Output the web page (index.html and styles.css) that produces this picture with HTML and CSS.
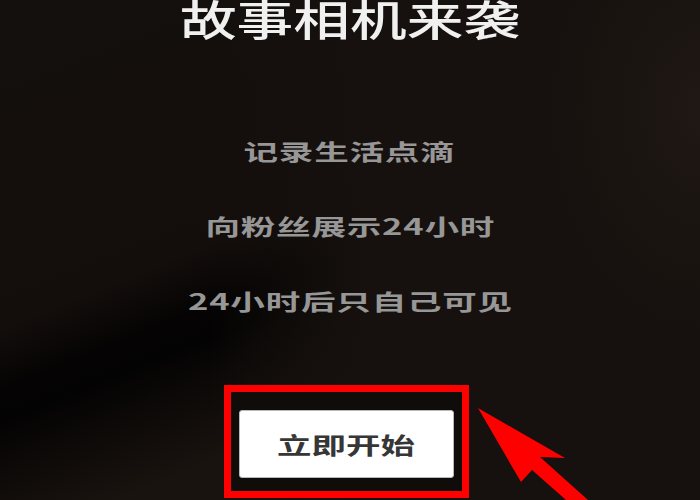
FILE: index.html
```html
<!DOCTYPE html>
<html lang="zh-CN">
<head>
<meta charset="utf-8">
<title>故事相机来袭</title>
<link rel="stylesheet" href="styles.css">
</head>
<body>
<main class="page">
  <h1 class="title"><span class="stretch-title">故事相机来袭</span></h1>
  <ul class="features">
    <li class="feature"><span class="stretch-line">记录生活点滴</span></li>
    <li class="feature"><span class="stretch-line">向粉丝展示24小时</span></li>
    <li class="feature"><span class="stretch-line">24小时后只自己可见</span></li>
  </ul>
  <div class="highlight">
    <button class="start-btn"><span class="stretch-btn">立即开始</span></button>
  </div>
  <svg class="arrow" width="130" height="100" viewBox="0 0 130 100" aria-hidden="true">
    <polygon points="8,8 95,58 70,57 118,100 96,100 62,70 51,82" fill="#ff0000"/>
  </svg>
</main>
</body>
</html>
```

FILE: styles.css
```css
html, body {
  margin: 0;
  padding: 0;
}

body {
  width: 700px;
  height: 500px;
  overflow: hidden;
  font-family: "Noto Sans CJK SC", "Noto Sans", sans-serif;
  background:
    radial-gradient(ellipse 220px 320px at 700px 110px, rgba(52, 40, 33, 0.3), rgba(52, 40, 33, 0) 70%),
    linear-gradient(to right, rgba(22, 17, 14, 0) 30%, #16110e 52%),
    linear-gradient(158deg, #14100d 0%, #130e0c 42%, #050303 50%, #040303 54%, #0b0807 59%, #19130f 70%, #18130f 100%);
}

.page {
  position: relative;
  width: 700px;
  height: 500px;
  display: flex;
  flex-direction: column;
  align-items: center;
}

.title {
  margin: -3px 0 0;
  font-size: 42px;
  line-height: 42px;
  font-weight: 500;
  color: #f0f0f0;
  white-space: nowrap;
}

.stretch-title {
  display: inline-block;
  transform: scaleX(1.35);
}

.features {
  list-style: none;
  margin: 96px 0 0;
  padding: 0;
  display: flex;
  flex-direction: column;
  align-items: center;
  gap: 45px;
}

.feature {
  font-size: 22px;
  line-height: 30px;
  height: 30px;
  font-weight: 700;
  color: #979797;
  white-space: nowrap;
}

.stretch-line {
  display: inline-block;
  letter-spacing: 0.5px;
  transform: scaleX(1.57);
}

.highlight {
  margin: 70px 8px 0 0;
  border: 7px solid #ff0000;
  padding: 18px 8px 13px;
  background: #100c0a;
}

.start-btn {
  display: flex;
  align-items: center;
  justify-content: center;
  width: 215px;
  height: 68px;
  margin: 0;
  padding: 0;
  background: #ffffff;
  border: 1px solid #b9b9b9;
  border-radius: 3px;
  font-family: "Noto Sans CJK SC", "Noto Sans", sans-serif;
  font-size: 23px;
  font-weight: 700;
  color: #363636;
}

.stretch-btn {
  display: inline-block;
  transform: scaleX(1.5);
}

.arrow {
  position: absolute;
  left: 470px;
  top: 400px;
}
```
